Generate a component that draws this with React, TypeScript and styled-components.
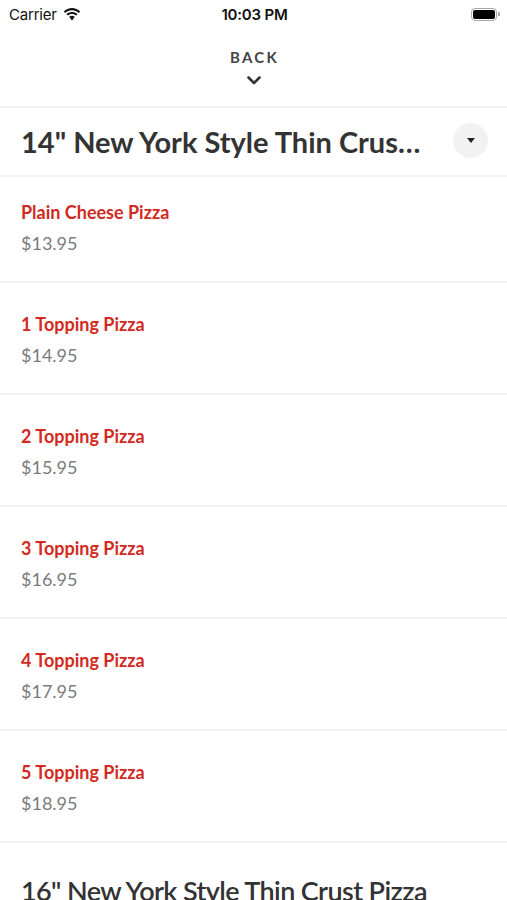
import React from 'react';
import styled, { createGlobalStyle } from 'styled-components';

const GlobalStyle = createGlobalStyle`
	html, body {
		margin: 0;
		padding: 0;
		background: #fff;
	}
	body {
		font-family: Lato, 'Noto Sans', sans-serif;
		-webkit-font-smoothing: antialiased;
	}
`;

const Screen = styled.div`
	width: 507px;
	height: 900px;
	overflow: hidden;
	background: #fff;
`;

const StatusBar = styled.div`
	height: 28px;
	display: grid;
	grid-template-columns: 1fr auto 1fr;
	align-items: center;
	padding: 0 7px 0 9px;
	font-family: Inter, 'Liberation Sans', sans-serif;
	font-size: 15px;
	color: #111;
`;

const Carrier = styled.div`
	display: flex;
	align-items: center;
	gap: 6px;
	letter-spacing: -0.2px;
`;

const Time = styled.div`
	font-weight: 600;
	letter-spacing: -0.2px;
`;

const Battery = styled.div`
	justify-self: end;
	display: flex;
	align-items: center;
	gap: 1px;
	div:first-child {
		width: 22px;
		height: 9px;
		border: 1.5px solid #a8a8a8;
		border-radius: 4px;
		padding: 1px;
		box-sizing: content-box;
	}
	div:first-child::after {
		content: '';
		display: block;
		width: 100%;
		height: 100%;
		background: #000;
		border-radius: 2px;
	}
	span {
		width: 2px;
		height: 4px;
		background: #a8a8a8;
		border-radius: 0 1px 1px 0;
	}
`;

const BackNav = styled.div`
	height: 78px;
	display: flex;
	flex-direction: column;
	align-items: center;
	padding-top: 20px;
	box-sizing: border-box;
`;

const BackLabel = styled.div`
	font-size: 15px;
	font-weight: 700;
	letter-spacing: 2.2px;
	color: #444;
	line-height: 18px;
	margin-left: 2px;
`;

const Chevron = styled.svg`
	margin-top: 10px;
`;

const Divider = styled.div`
	height: 2px;
	background: #f2f2f2;
`;

const SectionHeader = styled.div<{ $top?: number }>`
	display: flex;
	align-items: center;
	padding: ${(p) => p.$top ?? 0}px 19px 0 21px;
	height: ${(p) => 67 + (p.$top ?? 0)}px;
	box-sizing: border-box;
`;

// the pinned header title is drawn larger than the one scrolling in below
const SectionTitle = styled.h2<{ $pinned?: boolean }>`
	flex: 1;
	min-width: 0;
	margin: 0 26px 0 0;
	font-size: ${(p) => (p.$pinned ? 29 : 27)}px;
	font-weight: ${(p) => (p.$pinned ? 700 : 600)};
	letter-spacing: ${(p) => (p.$pinned ? 0 : -0.6)}px;
	color: #333;
	white-space: nowrap;
	overflow: hidden;
	text-overflow: ellipsis;
`;

const DropButton = styled.button`
	width: 35px;
	height: 35px;
	flex-shrink: 0;
	border-radius: 50%;
	border: none;
	background: #f2f2f2;
	display: flex;
	align-items: center;
	justify-content: center;
	padding: 0;
	margin-top: -2px;
`;

const Item = styled.div<{ $first?: boolean }>`
	padding: ${(p) => (p.$first ? 24 : 30)}px 21px 27px;
	display: flex;
	flex-direction: column;
	gap: 9px;
`;

const ItemName = styled.div`
	font-size: 18px;
	line-height: 22px;
	font-weight: 700;
	color: #d22a1f;
`;

const ItemPrice = styled.div`
	font-size: 18px;
	line-height: 22px;
	color: #7b7b7b;
`;

const items = [
	{ name: 'Plain Cheese Pizza', price: '$13.95' },
	{ name: '1 Topping Pizza', price: '$14.95' },
	{ name: '2 Topping Pizza', price: '$15.95' },
	{ name: '3 Topping Pizza', price: '$16.95' },
	{ name: '4 Topping Pizza', price: '$17.95' },
	{ name: '5 Topping Pizza', price: '$18.95' },
];

const WifiIcon = () => (
	<svg width="18" height="13" viewBox="0 0 18 13">
		<path d="M9 2.2c2.6 0 5 1 6.8 2.7l1.4-1.5C15 1.3 12.1 0 9 0S3 1.3.8 3.4l1.4 1.5C4 3.2 6.4 2.2 9 2.2z" fill="#111" />
		<path d="M9 6c1.6 0 3 .6 4.1 1.6l1.4-1.5C13.1 4.7 11.1 3.9 9 3.9s-4.1.8-5.5 2.2l1.4 1.5C6 6.6 7.4 6 9 6z" fill="#111" />
		<path d="M9 9.7c.7 0 1.3.3 1.7.7L9 12.6 7.3 10.4c.4-.4 1-.7 1.7-.7z" fill="#111" />
		<path d="M9 7.8c1.1 0 2.1.4 2.8 1.1l-1.2 1.4C10.2 9.9 9.6 9.7 9 9.7s-1.2.2-1.6.6L6.2 8.9C6.9 8.2 7.9 7.8 9 7.8z" fill="#111" />
	</svg>
);

export default function App() {
	return (
		<Screen>
			<GlobalStyle />
			<StatusBar>
				<Carrier>
					Carrier
					<WifiIcon />
				</Carrier>
				<Time>10:03 PM</Time>
				<Battery>
					<div />
					<span />
				</Battery>
			</StatusBar>

			<BackNav>
				<BackLabel>BACK</BackLabel>
				<Chevron width="14" height="9" viewBox="0 0 14 9">
					<path d="M1.5 1.5 7 7l5.5-5.5" fill="none" stroke="#333" strokeWidth="2.6" strokeLinecap="round" strokeLinejoin="round" />
				</Chevron>
			</BackNav>
			<Divider />

			<SectionHeader>
				<SectionTitle $pinned>14" New York Style Thin Crust Pizza</SectionTitle>
				<DropButton aria-label="Choose section">
					<svg width="8" height="5" viewBox="0 0 8 5">
						<path d="M0 0h8L4 5z" fill="#222" />
					</svg>
				</DropButton>
			</SectionHeader>
			<Divider />

			{items.map((it, i) => (
				<React.Fragment key={it.name}>
					<Item $first={i === 0}>
						<ItemName>{it.name}</ItemName>
						<ItemPrice>{it.price}</ItemPrice>
					</Item>
					<Divider />
				</React.Fragment>
			))}

			<SectionHeader $top={14}>
				<SectionTitle>16" New York Style Thin Crust Pizza</SectionTitle>
			</SectionHeader>
		</Screen>
	);
}
